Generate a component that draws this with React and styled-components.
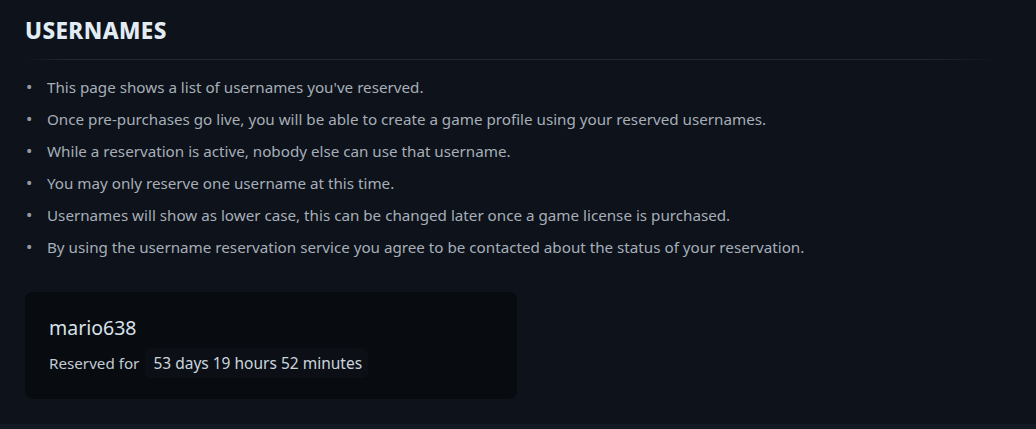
import React from "react"
import styled, { createGlobalStyle } from "styled-components"

const Global = createGlobalStyle`
    html, body {
        margin: 0;
        padding: 0;
        background: #0e121a;
    }
    body {
        font-family: "Noto Sans", "Open Sans", sans-serif;
    }
`

const Page = styled.div`
    display: flex;
    flex-direction: column;
    min-height: 429px;
`

const Main = styled.main`
    height: 424px;
    box-sizing: border-box;
    padding: 15px 25px 0 25px;
`

const Footer = styled.footer`
    flex: 1;
    background: #141a23;
`

const Title = styled.h1`
    margin: 0;
    font-size: 22.5px;
    font-weight: 800;
    letter-spacing: 0.4px;
    color: #e1ecf5;
    line-height: 31px;
`

const Divider = styled.div`
    height: 1px;
    margin: 13px 10px 0 0;
    background: linear-gradient(90deg, rgba(40, 46, 56, 0) 0%, #23282f 4%, #23282f 92%, rgba(40, 46, 56, 0) 100%);
`

const List = styled.ul`
    margin: 11px 0 0 0;
    padding: 0;
    list-style: none;
    color: #a6afb9;
    font-size: 15.2px;
`

const Item = styled.li`
    display: flex;
    line-height: 32px;

    &::before {
        content: "•";
        width: 21px;
        padding-left: 1px;
        flex-shrink: 0;
        color: #949da7;
        font-size: 17px;
    }
`

const Card = styled.div`
    margin-top: 29px;
    width: 492px;
    height: 107px;
    box-sizing: border-box;
    padding: 23px 24px;
    background: #080b10;
    border-radius: 8px;
`

const Name = styled.div`
    font-size: 19.5px;
    color: #d6e1ea;
    line-height: 26px;
`

const Reserved = styled.div`
    margin-top: 7px;
    display: flex;
    align-items: center;
    gap: 6px;
    font-size: 15.2px;
    color: #c2ccd5;
`

const Badge = styled.span`
    padding: 4px 6px 4px 8px;
    border-radius: 5px;
    background: #0c1016;
    color: #cbd5de;
    font-size: 15.5px;
`

const items = [
    "This page shows a list of usernames you've reserved.",
    "Once pre-purchases go live, you will be able to create a game profile using your reserved usernames.",
    "While a reservation is active, nobody else can use that username.",
    "You may only reserve one username at this time.",
    "Usernames will show as lower case, this can be changed later once a game license is purchased.",
    "By using the username reservation service you agree to be contacted about the status of your reservation.",
]

export default function App() {
    return (
        <Page>
            <Global />
            <Main>
                <Title>USERNAMES</Title>
                <Divider />
                <List>
                    {items.map((t) => (
                        <Item key={t}>{t}</Item>
                    ))}
                </List>
                <Card>
                    <Name>mario638</Name>
                    <Reserved>
                        Reserved for <Badge>53 days 19 hours 52 minutes</Badge>
                    </Reserved>
                </Card>
            </Main>
            <Footer />
        </Page>
    )
}
